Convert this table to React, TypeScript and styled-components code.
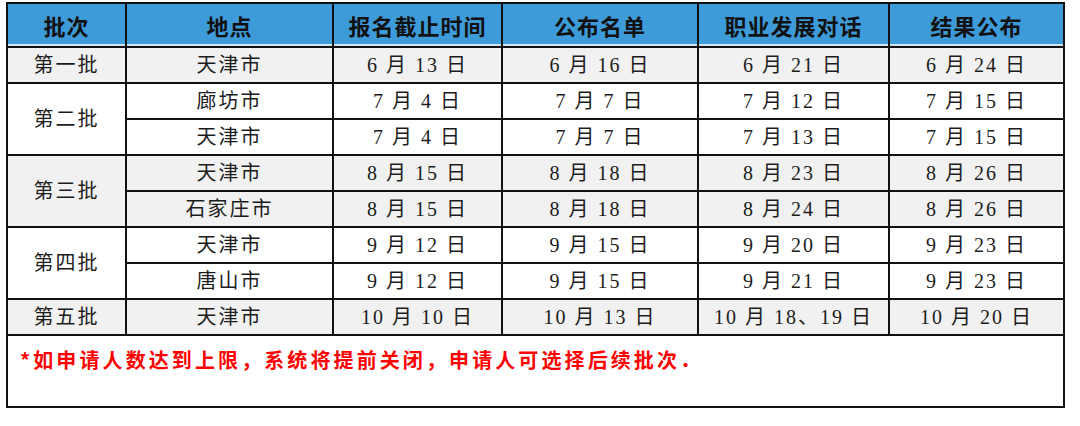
import styled, { createGlobalStyle } from 'styled-components';

const GlobalStyle = createGlobalStyle`
  body {
    margin: 0;
    background: #ffffff;
    font-family: "Liberation Serif", "Noto Sans CJK SC", serif;
  }
`;

type Row = {
  batch?: string;
  span?: number;
  place: string;
  dates: string[];
  shade: boolean;
};

const rows: Row[] = [
  { batch: '第一批', span: 1, place: '天津市', dates: ['6 月 13 日', '6 月 16 日', '6 月 21 日', '6 月 24 日'], shade: true },
  { batch: '第二批', span: 2, place: '廊坊市', dates: ['7 月 4 日', '7 月 7 日', '7 月 12 日', '7 月 15 日'], shade: false },
  { place: '天津市', dates: ['7 月 4 日', '7 月 7 日', '7 月 13 日', '7 月 15 日'], shade: false },
  { batch: '第三批', span: 2, place: '天津市', dates: ['8 月 15 日', '8 月 18 日', '8 月 23 日', '8 月 26 日'], shade: true },
  { place: '石家庄市', dates: ['8 月 15 日', '8 月 18 日', '8 月 24 日', '8 月 26 日'], shade: true },
  { batch: '第四批', span: 2, place: '天津市', dates: ['9 月 12 日', '9 月 15 日', '9 月 20 日', '9 月 23 日'], shade: false },
  { place: '唐山市', dates: ['9 月 12 日', '9 月 15 日', '9 月 21 日', '9 月 23 日'], shade: false },
  { batch: '第五批', span: 1, place: '天津市', dates: ['10 月 10 日', '10 月 13 日', '10 月 18、19 日', '10 月 20 日'], shade: true },
];

const headers = ['批次', '地点', '报名截止时间', '公布名单', '职业发展对话', '结果公布'];
const widths = [119, 207, 169, 196, 191, 175];

export default function App() {
  return (
    <>
      <GlobalStyle />
      <Page>
        <Table>
          <colgroup>
            {widths.map((w, i) => (
              <col key={i} style={{ width: w }} />
            ))}
          </colgroup>
          <thead>
            <tr>
              {headers.map((h) => (
                <HeadCell key={h}>{h}</HeadCell>
              ))}
            </tr>
          </thead>
          <tbody>
            {rows.map((r, i) => (
              <tr key={i}>
                {r.batch && (
                  <Cell rowSpan={r.span} $shade={r.shade}>
                    {r.batch}
                  </Cell>
                )}
                <Cell $shade={r.shade}>{r.place}</Cell>
                {r.dates.map((d, j) => (
                  <Cell key={j} $shade={r.shade}>
                    {d}
                  </Cell>
                ))}
              </tr>
            ))}
            <tr>
              <NoteCell colSpan={6}>*如申请人数达到上限，系统将提前关闭，申请人可选择后续批次．</NoteCell>
            </tr>
          </tbody>
        </Table>
      </Page>
    </>
  );
}

const Page = styled.div`
  padding: 2px 0 0 6px;
`;

const Table = styled.table`
  width: 1057px;
  table-layout: fixed;
  border-collapse: collapse;
  border: 2px solid #111111;
`;

const HeadCell = styled.th`
  height: 42px;
  padding: 0;
  background: #3e9bda;
  border: 2px solid #111111;
  border-top: 0;
  box-shadow: inset 0 -2px 0 #cfe6f7;
  color: #111111;
  font-family: "Noto Sans CJK SC", sans-serif;
  font-size: 22px;
  font-weight: 700;
  letter-spacing: 1px;
  text-align: center;
  vertical-align: middle;
`;

const Cell = styled.td<{ $shade: boolean }>`
  height: 34px;
  padding: 0;
  background: ${(p) => (p.$shade ? '#f1f1f1' : '#ffffff')};
  border: 2px solid #111111;
  color: #1c1c1c;
  font-family: "Liberation Serif", "Noto Sans CJK SC", serif;
  font-size: 20px;
  font-weight: 400;
  letter-spacing: 2px;
  text-align: center;
  vertical-align: middle;
  line-height: 1;
`;

const NoteCell = styled.td`
  height: 72px;
  padding: 9px 0 0 12px;
  box-sizing: border-box;
  border: 2px solid #111111;
  background: #ffffff;
  color: #ff0000;
  font-family: "Noto Sans CJK SC", sans-serif;
  font-size: 20px;
  font-weight: 700;
  letter-spacing: 3.1px;
  text-align: left;
  vertical-align: top;
`;
